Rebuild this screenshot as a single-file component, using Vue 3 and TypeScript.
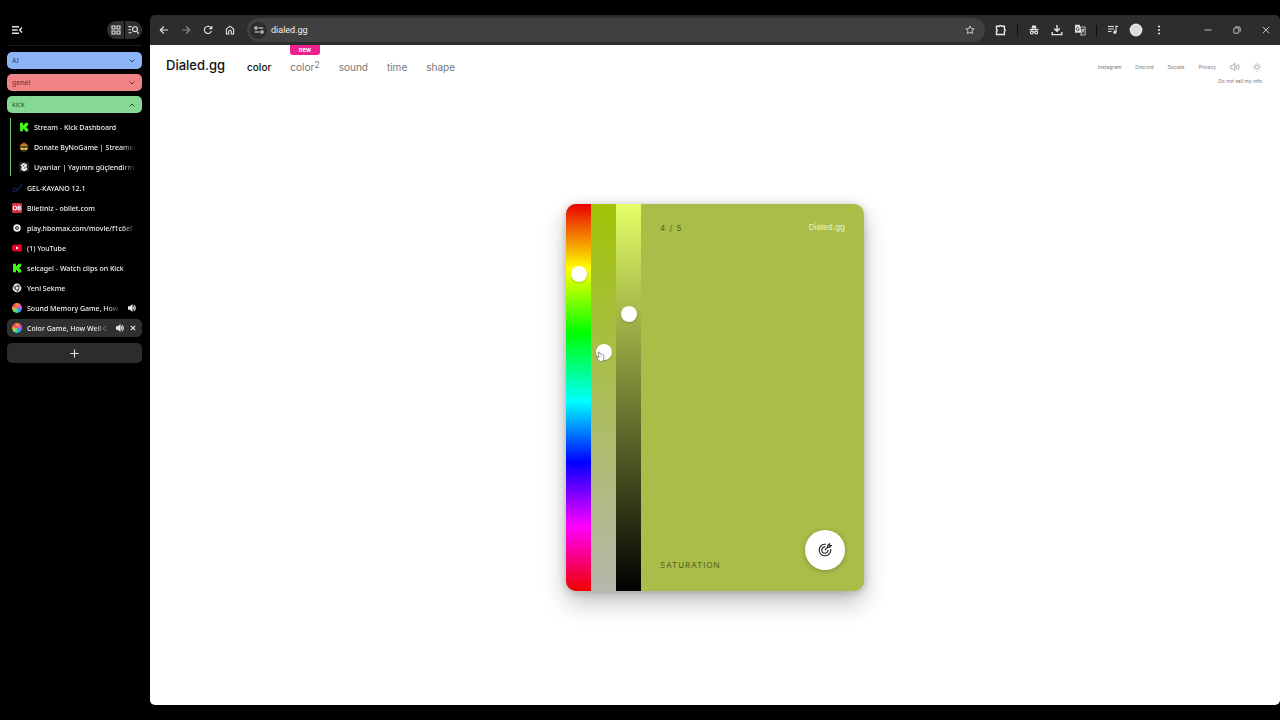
<script setup lang="ts">
import { ref } from 'vue'

interface Tab {
  title: string
  icon: string
  sound?: boolean
  active?: boolean
}

const groups = [
  { name: 'AI', tone: 'blue', open: false },
  { name: 'genel', tone: 'red', open: false },
  { name: 'kick', tone: 'green', open: true },
]

const grouped: Tab[] = [
  { title: 'Stream - Kick Dashboard', icon: 'kick' },
  { title: 'Donate ByNoGame | Streamer', icon: 'donate' },
  { title: 'Uyarılar | Yayınını güçlendirme', icon: 'alerts' },
]

const tabs: Tab[] = [
  { title: 'GEL-KAYANO 12.1', icon: 'asics' },
  { title: 'Biletiniz - obilet.com', icon: 'obilet' },
  { title: 'play.hbomax.com/movie/f1c6ef', icon: 'hbo' },
  { title: '(1) YouTube', icon: 'youtube' },
  { title: 'seicagel - Watch clips on Kick', icon: 'kick' },
  { title: 'Yeni Sekme', icon: 'chrome' },
  { title: 'Sound Memory Game, How', icon: 'wheel', sound: true },
  { title: 'Color Game, How Well C', icon: 'wheel', sound: true, active: true },
]

const links = ['Instagram', 'Discord', 'Socials', 'Privacy']
const url = ref('dialed.gg')
const hue = ref(168)
const saturation = ref(377)
const brightness = ref(275)
</script>

<template>
  <div class="window">
    <aside class="sidebar">
      <div class="side-head">
        <button class="icon-btn" aria-label="Collapse tabs">
          <svg width="12" height="12" viewBox="0 0 12 12" class="line heavy"><path d="M1 2.8h7M1 6h5.5M1 9.2h7M11 3.6 8.6 6 11 8.4" /></svg>
        </button>
        <div class="side-tools">
          <button class="tool" aria-label="Tab groups">
            <svg width="10" height="10" viewBox="0 0 10 10" class="line"><path d="M1 1h3v3H1zM6 1h3v3H6zM1 6h3v3H1zM6 6h3v3H6z" /></svg>
          </button>
          <button class="tool" aria-label="Search tabs">
            <svg width="11" height="10" viewBox="0 0 11 10" class="line"><path d="M.5 1.6h3M.5 4.7h2.4M.5 7.8h3.2M8.8 6.5l1.9 2.3" /><circle cx="7" cy="4.2" r="2.4" /></svg>
          </button>
        </div>
      </div>

      <div class="groups">
        <button v-for="g in groups" :key="g.name" class="group" :class="g.tone" :aria-expanded="g.open">
          <span>{{ g.name }}</span>
          <svg width="6" height="4" viewBox="0 0 6 4"><path :d="g.open ? 'M.6 3.4 3 1l2.4 2.4' : 'M.6.6 3 3 5.4.6'" /></svg>
        </button>
      </div>

      <div class="tab-lists">
        <div v-for="(list, n) in [grouped, tabs]" :key="n" class="tabs" :class="{ nested: n === 0 }">
          <div v-for="t in list" :key="t.title" class="tab" :class="{ active: t.active }">
            <svg class="fav" width="10" height="10" viewBox="0 0 10 10">
              <path v-if="t.icon === 'kick'" fill="#3ff51a" d="M1 .8h3v2.2h1V2h1V.8h3.2v3H8v1H7v.6h1v1h1.2v3H6V8H5V7H4v2.2H1z" />
              <g v-else-if="t.icon === 'donate'">
                <circle cx="5" cy="5.4" r="4.2" fill="#c98b22" /><path d="M3 2.4 5 0l2 2.4z" fill="#df3d2d" /><path d="M1.2 4.3h7.6v1.5H1.2zM2 7.8h6L6.5 9.4h-3z" fill="#243520" /><path d="M2.4 6h2v1.4h-2zM5.6 6h2v1.4h-2z" fill="#f2e8a0" />
              </g>
              <g v-else-if="t.icon === 'alerts'">
                <rect width="10" height="10" rx="2" fill="#25292c" /><path d="M4.8 1 8 2.5 7.4 5 8.4 7.6 5 9.2 2 7.4 2.8 5 1.6 3z" fill="#f4f4f4" /><path d="m3.7 3.9 1.8-.7M4.8 6.3l1.7-.7" stroke="#25292c" />
              </g>
              <path v-else-if="t.icon === 'asics'" d="M.3 8.3C4 9 7.6 5.7 9.6 1.5M1 6.3c1.8-2 3.6-1.6 4.1.4" fill="none" stroke="#102a66" stroke-width="1.1" />
              <g v-else-if="t.icon === 'obilet'">
                <rect width="10" height="10" rx="1" fill="#cf2f3d" /><ellipse cx="2.9" cy="5" rx="1.6" ry="2" fill="none" stroke="#fff" stroke-width="1.1" /><path d="M6 3h1.5c1.6 0 1.6 1.9 0 1.9H6 7.8c1.6 0 1.6 2.1 0 2.1H6z" fill="none" stroke="#fff" stroke-width="1" />
              </g>
              <g v-else-if="t.icon === 'hbo'">
                <circle cx="5" cy="5" r="3.7" fill="#eee" /><circle cx="5" cy="5" r="1.5" fill="none" stroke="#222" stroke-width=".9" /><circle cx="5" cy="5" r=".5" fill="#222" />
              </g>
              <g v-else-if="t.icon === 'youtube'">
                <rect y="1.5" width="10" height="7" rx="2" fill="#e5002d" /><path d="m4 3.4 2.8 1.6L4 6.6z" fill="#fff" />
              </g>
              <g v-else-if="t.icon === 'chrome'">
                <circle cx="5" cy="5" r="4.4" fill="#e8e8e8" /><circle cx="5" cy="5" r="2.1" fill="#e8e8e8" stroke="#222" stroke-width=".9" /><path d="M5 2.9h4M3.2 6 1.3 2.6M6.8 6 4.9 9.4" stroke="#222" stroke-width=".8" />
              </g>
              <foreignObject v-else width="10" height="10"><div class="wheel"></div></foreignObject>
            </svg>
            <button class="tab-title">{{ t.title }}</button>
            <svg v-if="t.sound" class="line snd" width="8" height="8" viewBox="0 0 8 8"><path fill="#eee" d="M.6 2.9H2L4 1.2v5.6L2 5.1H.6z" /><path d="M5.2 2.7q1 1.3 0 2.6M6 1.1q2.6 2.9 0 5.8" /></svg>
            <button v-if="t.active" class="icon-btn close" aria-label="Close tab">
              <svg width="6" height="6" viewBox="0 0 6 6" class="line"><path d="m.8.8 4.4 4.4M5.2.8.8 5.2" /></svg>
            </button>
          </div>
        </div>
      </div>

      <button class="new-tab" aria-label="New tab">
        <svg width="9" height="9" viewBox="0 0 9 9" class="line"><path d="M4.5.5v8M.5 4.5h8" /></svg>
      </button>
    </aside>

    <div class="browser">
      <div class="toolbar">
        <div class="nav-btns">
          <button class="icon-btn" aria-label="Back"><svg width="10" height="10" viewBox="0 0 10 10" class="line"><path d="M9 5H1.5M4.8 1.5 1.3 5l3.5 3.5" /></svg></button>
          <button class="icon-btn dim" aria-label="Forward"><svg width="10" height="10" viewBox="0 0 10 10" class="line"><path d="M1 5h7.5M5.2 1.5 8.7 5 5.2 8.5" /></svg></button>
          <button class="icon-btn" aria-label="Reload"><svg width="10" height="10" viewBox="0 0 10 10" class="line"><path d="M8.4 6A3.6 3.6 0 1 1 7.7 2.5L8.6 3.6M8.8 1v2.8H6" /></svg></button>
          <button class="icon-btn" aria-label="Home"><svg width="10" height="10" viewBox="0 0 10 10" class="line"><path d="M1.4 4.1 5 1.1l3.6 3V9H6.3V6.6a1.3 1.3 0 0 0-2.6 0V9H1.4z" /></svg></button>
        </div>
        <div class="address">
          <button class="site" aria-label="Site information"><svg width="10" height="8" viewBox="0 0 10 8" class="line"><circle cx="2" cy="2" r="1.2" /><path d="M4.5 2h4.7M.8 6h4.7" /><circle cx="8" cy="6" r="1.2" /></svg></button>
          <input v-model="url" aria-label="Address" />
          <button class="icon-btn" aria-label="Bookmark"><svg width="10" height="10" viewBox="0 0 10 10" class="line thin"><path d="m5 1 1.2 2.6 2.9.3L7 5.8l.6 2.9L5 7.2 2.4 8.7 3 5.8.9 3.9l2.9-.3z" /></svg></button>
        </div>
        <div class="extensions">
          <button class="icon-btn" aria-label="Extensions"><svg width="12" height="12" viewBox="0 0 12 12" class="line heavy"><path d="M1.5 2.2h3q.8-1.6 1.9 0h3v3q1.8.9 0 1.9v3.4H1.5V7.4q1.8-1 0-2z" /></svg></button>
          <span class="bar"></span>
          <button class="icon-btn" aria-label="Private mode"><svg width="10" height="10" viewBox="0 0 10 10" class="line"><path fill="#ddd" d="M3 3.6 3.6 1h2.8L7 3.6" /><path d="M.5 4.6h9M4.2 7.2q.8-.5 1.6 0" /><circle cx="2.8" cy="7.5" r="1.4" /><circle cx="7.2" cy="7.5" r="1.4" /></svg></button>
          <button class="icon-btn" aria-label="Downloads"><svg width="12" height="12" viewBox="0 0 12 12" class="line heavy"><path d="M6 1v6M3.2 4.6 6 7.3l2.8-2.7M1.2 8v2.6h9.6V8" /></svg></button>
          <button class="icon-btn" aria-label="Translate"><svg width="12" height="12" viewBox="0 0 12 12"><path fill="#ddd" d="M1 .8h4.8l2.2 8H1z" /><path d="M5 3.3H7.5M7.4 3h3.8v8H6.4l1.4-2.2M7.5 5.4h3M9 4.6v.8M10 5.6Q9.5 7.7 7.8 8.3M8 6q.8 1.6 2.3 2.3" fill="none" stroke="#ddd" stroke-width=".8" /><path d="M4.9 4A1.5 1.5 0 1 0 5.2 5.2H3.9" fill="none" stroke="#333" stroke-width=".8" /></svg></button>
          <span class="bar"></span>
          <button class="icon-btn" aria-label="Media"><svg width="12" height="10" viewBox="0 0 12 10" class="line"><path d="M1 1.5h6M1 4h6M1 6.5h3.5M9 7V1.4h2" /><circle cx="7.9" cy="7.2" r="1.1" fill="#ddd" /></svg></button>
          <button class="icon-btn" aria-label="Profile"><svg width="14" height="14" viewBox="0 0 14 14"><circle cx="7" cy="7" r="6.4" fill="#e4dfdf" /><path d="M4 5q3-3 6 0M5 7h1M8.4 7h1M5 10q2-2 4 0M4 5v4" fill="none" stroke="#cbc4c4" stroke-width=".7" /></svg></button>
          <button class="icon-btn" aria-label="Menu"><svg width="4" height="10" viewBox="0 0 4 10" fill="#eee"><circle cx="2" cy="1.4" r="1" /><circle cx="2" cy="5" r="1" /><circle cx="2" cy="8.6" r="1" /></svg></button>
        </div>
        <div class="win-btns">
          <button class="icon-btn" aria-label="Minimize"><svg width="8" height="8" viewBox="0 0 8 8" class="line thin"><path d="M.5 4h7" /></svg></button>
          <button class="icon-btn" aria-label="Restore"><svg width="8" height="8" viewBox="0 0 8 8" class="line thin"><rect x=".8" y="2" width="5" height="5.2" rx="1" /><path d="M2.4.8h3.3q1.5 0 1.5 1.5v3.3" /></svg></button>
          <button class="icon-btn" aria-label="Close"><svg width="8" height="8" viewBox="0 0 8 8" class="line thin"><path d="m.8.8 6.4 6.4M7.2.8.8 7.2" /></svg></button>
        </div>
      </div>

      <div class="page">
        <header>
          <a href="#" class="logo">Dialed.gg</a>
          <nav class="games">
            <a href="#color" class="current">color</a>
            <a href="#color2" class="with-badge">color<span class="two">2</span><span class="badge">new</span></a>
            <a href="#sound">sound</a>
            <a href="#time">time</a>
            <a href="#shape">shape</a>
          </nav>
          <div class="meta">
            <nav class="links">
              <a v-for="l in links" :key="l" href="#">{{ l }}</a>
              <button class="icon-btn" aria-label="Sound"><svg width="10" height="10" viewBox="0 0 10 10"><path d="M.7 3.5h1.6L4.8 1.3v7.4L2.3 6.5H.7zM6.3 3q1.2 2 0 4M8 1.7q2.4 3.3 0 6.6" /></svg></button>
              <button class="icon-btn" aria-label="Theme"><svg width="10" height="10" viewBox="0 0 10 10"><circle cx="5" cy="5" r="2" /><path d="M5 .4v1.2M5 8.4v1.2M.4 5h1.2M8.4 5h1.2M1.7 1.7l.9.9M7.4 7.4l.9.9M1.7 8.3l.9-.9M7.4 2.6l.9-.9" /></svg></button>
            </nav>
            <a href="#privacy">Do not sell my info</a>
          </div>
        </header>

        <main>
          <section class="card">
            <input v-model="hue" class="slider hue" type="range" min="0" max="1000" aria-label="Hue" />
            <div class="sat-wrap">
              <input v-model="saturation" class="slider sat" type="range" min="0" max="1000" aria-label="Saturation" />
              <svg class="pointer" width="9" height="12" viewBox="0 0 9 12"><path d="M2.2 1.1q.9-.7 1.4.3l.6 2 .4-.5q.7-.3 1 .4.8-.5 1.2.3.9-.2 1.1.8v3.2q-.2 2.6-2.6 3-2.2.1-3-1.7L.8 6.5q.2-1 1.2-.5l.7.7z" fill="#fff" stroke="#666" stroke-width=".7" /><path d="M3.9 5.1v1.2M5.4 5.1v1.2" stroke="#888" stroke-width=".5" /></svg>
            </div>
            <input v-model="brightness" class="slider bri" type="range" min="0" max="1000" aria-label="Brightness" />
            <div class="swatch">
              <div class="row top"><span class="count">4 / 5</span><span class="mark">Dialed.gg</span></div>
              <div class="row bottom">
                <span class="caption">SATURATION</span>
                <button class="go" aria-label="Submit color">
                  <svg width="14" height="14" viewBox="0 0 14 14"><path d="M8 1.3A5.8 5.8 0 1 0 12.7 6M7.5 3.9A3.2 3.2 0 1 0 10.1 7M6.8 7.2l3-3M9.6 4.4V2.5L11.4.8v1.8h1.8l-1.7 1.8z" /></svg>
                </button>
              </div>
            </div>
          </section>
        </main>
      </div>
    </div>
  </div>
</template>

<style>
body {
  background: #000;
}
</style>

<style scoped>
.window {
  display: flex;
  min-height: 100vh;
  box-sizing: border-box;
  padding: 15px 0;
  background: #000;
  color: #f0f0f0;
  font-family: "Noto Sans", "Open Sans", sans-serif;
  font-size: 7px;
}
button,
input {
  font: inherit;
  color: inherit;
  border: 0;
  padding: 0;
  margin: 0;
  background: none;
}
a {
  color: inherit;
  text-decoration: none;
}
svg {
  display: block;
  flex: none;
}
.line {
  fill: none;
  stroke: #e6e6e6;
  stroke-width: 1.1;
}
.thin {
  stroke-width: 0.8;
}
.heavy {
  stroke-width: 1.4;
}
.icon-btn {
  display: flex;
  align-items: center;
  justify-content: center;
}
.dim {
  opacity: 0.5;
}

.sidebar {
  flex: none;
  width: 150px;
  box-sizing: border-box;
  padding: 0 8px 0 7px;
}
.side-head {
  display: flex;
  align-items: center;
  justify-content: space-between;
  height: 30px;
  padding-left: 4px;
  border-bottom: 1px solid #1c1c1c;
}
.side-tools {
  display: flex;
  gap: 1px;
  border-radius: 9px;
  overflow: hidden;
}
.tool {
  display: flex;
  align-items: center;
  justify-content: center;
  width: 17px;
  height: 18px;
  background: #303030;
}
.groups {
  display: flex;
  flex-direction: column;
  gap: 5px;
  margin-top: 6px;
}
.group {
  display: flex;
  align-items: center;
  justify-content: space-between;
  height: 17px;
  padding: 0 7px 0 5px;
  border-radius: 5px;
}
.group svg {
  fill: none;
  stroke: currentColor;
}
.blue {
  background: #8eb4f8;
  color: #2c4470;
}
.red {
  background: #ee8284;
  color: #742c30;
}
.green {
  background: #86d994;
  color: #245c30;
}
.tab-lists {
  display: flex;
  flex-direction: column;
  gap: 3px;
  margin-top: 5px;
}
.tabs {
  display: flex;
  flex-direction: column;
  gap: 2px;
}
.nested {
  margin-left: 3px;
  border-left: 1px solid #6cc47c;
}
.tab {
  display: flex;
  align-items: center;
  height: 18px;
  padding: 0 6px 0 5px;
  border-radius: 5px;
}
.nested .tab {
  padding-left: 8px;
}
.active {
  background: #303030;
}
.fav {
  margin-right: 5px;
}
.tab-title {
  flex: 1;
  min-width: 0;
  overflow: hidden;
  white-space: nowrap;
  text-align: left;
  font-weight: 500;
  mask-image: linear-gradient(to right, #000 calc(100% - 14px), transparent);
}
.snd {
  margin-left: 7px;
}
.close {
  margin-left: 6px;
}
.wheel {
  width: 10px;
  height: 10px;
  border-radius: 50%;
  background: conic-gradient(#ff9838, #f55d8a, #b45cf0, #3a8ff5, #28d8a8, #6fe35a, #f5a03a, #f83a5a, #ff9838);
}
.new-tab {
  display: flex;
  align-items: center;
  justify-content: center;
  width: 100%;
  height: 20px;
  margin-top: 6px;
  border-radius: 5px;
  background: #2c2c2c;
}

.browser {
  flex: 1;
  min-width: 0;
  display: flex;
  flex-direction: column;
  border-radius: 5px;
  overflow: hidden;
}
.toolbar {
  display: flex;
  align-items: center;
  height: 30px;
  padding: 0 10px 0 9px;
  background: #2d2d2d;
}
.nav-btns {
  display: flex;
  gap: 12px;
  margin-right: 12px;
}
.nav-btns .icon-btn {
  width: 10px;
}
.address {
  flex: 1;
  display: flex;
  align-items: center;
  height: 24px;
  padding: 0 10px 0 3px;
  border-radius: 12px;
  background: #404040;
}
.address input {
  flex: 1;
  min-width: 0;
  margin-left: 4px;
  outline: 0;
  font-family: Roboto, "Noto Sans", sans-serif;
  font-size: 9px;
}
.site {
  display: flex;
  align-items: center;
  justify-content: center;
  width: 17px;
  height: 17px;
  border-radius: 50%;
  background: #2c2c2c;
}
.extensions {
  display: flex;
  align-items: center;
  gap: 9px;
  margin-left: 9px;
}
.extensions .icon-btn {
  width: 14px;
}
.bar {
  width: 1px;
  height: 11px;
  background: #0c0c0c;
}
.win-btns {
  display: flex;
  gap: 21px;
  margin-left: 38px;
}

.page {
  flex: 1;
  display: flex;
  flex-direction: column;
  background: #fff;
  color: #777;
  font-family: Inter, "Liberation Sans", sans-serif;
}
header {
  display: flex;
  align-items: flex-start;
  height: 45px;
  padding: 0 18px 0 16px;
}
.logo {
  margin-top: 11px;
  color: #111;
  font-size: 13px;
  line-height: 18px;
  font-weight: 500;
}
.games {
  display: flex;
  gap: 19px;
  margin: 14px 0 0 22px;
  font-size: 10px;
  line-height: 16px;
}
.current {
  color: #111;
  font-weight: 500;
}
.with-badge {
  position: relative;
}
.two {
  position: relative;
  top: -3px;
  font-size: 9px;
}
.badge {
  position: absolute;
  top: -14px;
  left: 0;
  right: 0;
  height: 10px;
  border-radius: 0 0 3px 3px;
  background: #ee2090;
  color: #fff;
  font-size: 6px;
  line-height: 10px;
  font-weight: 700;
  text-align: center;
}
.meta {
  display: flex;
  flex-direction: column;
  align-items: flex-end;
  margin: 17px 0 0 auto;
  font-size: 5px;
  line-height: 10px;
}
.meta > a {
  margin-top: 4px;
}
.links {
  display: flex;
  align-items: center;
  gap: 14px;
}
.links svg {
  fill: none;
  stroke: #888;
  stroke-width: 0.7;
}
.links .icon-btn + .icon-btn {
  margin-left: -2px;
}

main {
  flex: 1;
  display: flex;
  align-items: center;
  justify-content: center;
}
.card {
  display: flex;
  width: 298px;
  height: 387px;
  border-radius: 10px;
  overflow: hidden;
  background: #a9bd49;
  box-shadow: 0 12px 24px rgba(0, 0, 0, 0.24), 0 1px 8px rgba(0, 0, 0, 0.22);
}
.slider {
  display: block;
  flex: none;
  appearance: none;
  writing-mode: vertical-lr;
  width: 25px;
  height: 100%;
  outline: 0;
}
.slider::-webkit-slider-thumb {
  appearance: none;
  width: 16px;
  height: 16px;
  border-radius: 50%;
  background: #fff;
  box-shadow: 0 1px 2px rgba(0, 0, 0, 0.2);
}
.hue {
  background: linear-gradient(#e80000, #ff0 16.7%, #0f0 33.3%, #0ff 51%, #00f 66.7%, #f0f 83.3%, #f00000);
}
.sat {
  background: linear-gradient(#a0c307, #b5b8ac);
}
.bri {
  background: linear-gradient(#e5ff66, #000);
}
.sat-wrap {
  position: relative;
}
.pointer {
  position: absolute;
  top: 38%;
  left: 5px;
}
.swatch {
  flex: 1;
  display: flex;
  flex-direction: column;
  justify-content: space-between;
  padding: 17px 19px 21px 19px;
}
.row {
  display: flex;
  justify-content: space-between;
}
.count,
.caption {
  color: #56611f;
  font-size: 8px;
  line-height: 14px;
  letter-spacing: 1px;
}
.bottom {
  align-items: flex-end;
}
.caption {
  line-height: 10px;
}
.mark {
  color: #e4ebc0;
  font-size: 8px;
  line-height: 12px;
  font-weight: 500;
}
.go {
  display: flex;
  align-items: center;
  justify-content: center;
  width: 40px;
  height: 40px;
  border-radius: 50%;
  background: #fff;
  box-shadow: 0 1px 5px rgba(0, 0, 0, 0.25);
}
.go svg {
  fill: none;
  stroke: #222;
  stroke-width: 1.1;
}
</style>
